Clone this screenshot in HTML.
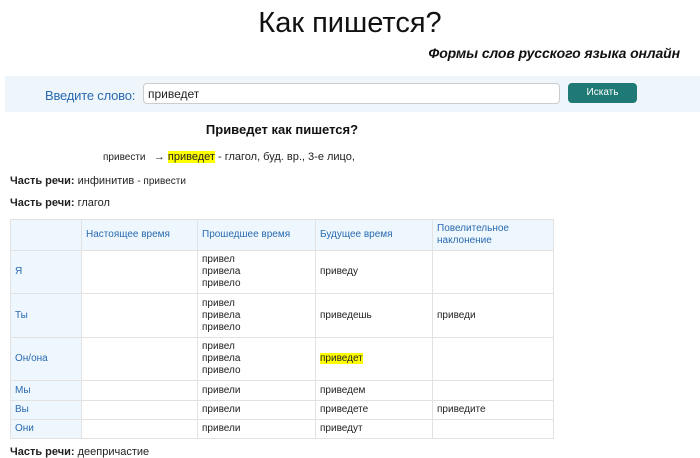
<!DOCTYPE html>
<html><head><meta charset="utf-8"><style>
*{margin:0;padding:0;box-sizing:border-box}
body{width:700px;height:457px;overflow:hidden;background:#fff;font-family:"Liberation Sans","DejaVu Sans",sans-serif;color:#222;position:relative}
.a{position:absolute;white-space:nowrap}
h1{position:absolute;left:0;width:700px;top:7px;text-align:center;font-size:29px;font-weight:normal;color:#111}
.sub{right:20px;top:45px;font-size:14px;font-style:italic;font-weight:bold;color:#111;letter-spacing:-0.1px}
.band{position:absolute;left:5px;top:76px;width:695px;height:36px;background:#eef6fb}
.lab{left:45px;top:88px;font-size:13px;color:#2a6ab0;letter-spacing:-0.2px}
.inp{position:absolute;left:143px;top:83px;width:417px;height:21px;border:1px solid #ccc;border-radius:4px;background:#fff;font-size:12px;padding:3px 4px}
.btn{position:absolute;left:568px;top:83px;width:69px;height:20px;background:#1f7a75;border-radius:4px;color:#fff;font-size:10px;text-align:center;line-height:20px}
.hd{left:0;width:564px;text-align:center;top:122px;font-size:13px;font-weight:bold;color:#111}
.ln{left:103px;top:151px;font-size:10px}
.ln2{font-size:11px}
mark{background:#ffff00;color:#222}
.cr{left:10px;font-size:11px}
table{position:absolute;left:10px;top:219px;border-collapse:collapse;font-size:10px}
td{border:1px solid #e2e2e2;padding:0 4px;vertical-align:middle;line-height:12px}
tr.h td{background:#eef7fd;color:#2a6ab0;height:31px}
td.p{background:#eef7fd;color:#2a6ab0}
</style></head><body>
<h1>Как пишется?</h1>
<div class="a sub">Формы слов русского языка онлайн</div>
<div class="band"></div>
<div class="a lab">Введите слово:</div>
<div class="inp">приведет</div>
<div class="btn">Искать</div>
<div class="a hd">Приведет как пишется?</div>
<div class="a ln">привести &nbsp;&nbsp;<span class="ln2">→ <mark>приведет</mark> - глагол, буд. вр., 3-е лицо,</span></div>
<div class="a cr" style="top:175px"><b>Часть речи:</b> инфинитив <span style="font-size:10px">- привести</span></div>
<div class="a cr" style="top:197px"><b>Часть речи:</b> глагол</div>
<table>
<colgroup><col style="width:71px"><col style="width:116px"><col style="width:118px"><col style="width:117px"><col style="width:121px"></colgroup>
<tr class="h"><td></td><td>Настоящее время</td><td>Прошедшее время</td><td>Будущее время</td><td>Повелительное наклонение</td></tr>
<tr style="height:43px"><td class="p">Я</td><td></td><td>привел<br>привела<br>привело</td><td>приведу</td><td></td></tr>
<tr style="height:44px"><td class="p">Ты</td><td></td><td>привел<br>привела<br>привело</td><td>приведешь</td><td>приведи</td></tr>
<tr style="height:43px"><td class="p">Он/она</td><td></td><td>привел<br>привела<br>привело</td><td><mark>приведет</mark></td><td></td></tr>
<tr style="height:20px"><td class="p">Мы</td><td></td><td>привели</td><td>приведем</td><td></td></tr>
<tr style="height:19px"><td class="p">Вы</td><td></td><td>привели</td><td>приведете</td><td>приведите</td></tr>
<tr style="height:19px"><td class="p">Они</td><td></td><td>привели</td><td>приведут</td><td></td></tr>
</table>
<div class="a cr" style="top:446px"><b>Часть речи:</b> деепричастие</div>
</body></html>
